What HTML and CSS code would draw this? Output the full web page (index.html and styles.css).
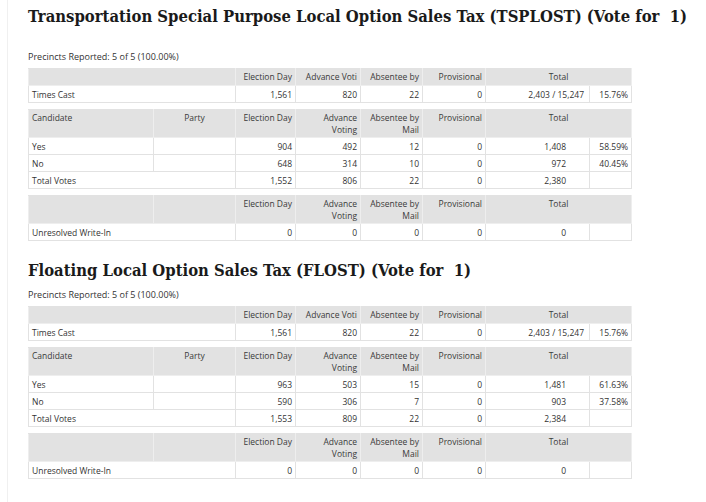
FILE: index.html
```html
<!DOCTYPE html>
<html lang="en">
<head>
<meta charset="utf-8">
<title>Election Results</title>
<link rel="stylesheet" href="styles.css">
</head>
<body>
<div class="page">
  <section class="contest contest-first">
    <h2 class="title">Transportation Special Purpose Local Option Sales Tax (TSPLOST) (Vote for &nbsp;1)</h2>
    <div class="precincts">Precincts Reported: 5 of 5 (100.00%)</div>

    <table class="grid grid-cast">
      <colgroup><col class="w1"><col class="w2"><col class="w3"><col class="w4"><col class="w5"><col class="w6"><col class="w7"><col class="w8"></colgroup>
      <tr>
        <th colspan="2"></th><th class="r">Election Day</th><th class="r">Advance Voti</th><th class="r">Absentee by</th><th class="r">Provisional</th><th colspan="2" class="c">Total</th>
      </tr>
      <tr>
        <td colspan="2">Times Cast</td><td class="r">1,561</td><td class="r">820</td><td class="r">22</td><td class="r">0</td><td class="r cast-total">2,403 / 15,247</td><td class="r">15.76%</td>
      </tr>
    </table>

    <table class="grid grid-cand">
      <colgroup><col class="w1"><col class="w2"><col class="w3"><col class="w4"><col class="w5"><col class="w6"><col class="w7"><col class="w8"></colgroup>
      <tr class="hd2">
        <th>Candidate</th><th class="c">Party</th><th class="r">Election Day</th><th class="r">Advance<br>Voting</th><th class="r">Absentee by<br>Mail</th><th class="r">Provisional</th><th colspan="2" class="c">Total</th>
      </tr>
      <tr><td>Yes</td><td></td><td class="r">904</td><td class="r">492</td><td class="r">12</td><td class="r">0</td><td class="r tot">1,408</td><td class="r">58.59%</td></tr>
      <tr><td>No</td><td></td><td class="r">648</td><td class="r">314</td><td class="r">10</td><td class="r">0</td><td class="r tot">972</td><td class="r">40.45%</td></tr>
      <tr><td colspan="2">Total Votes</td><td class="r">1,552</td><td class="r">806</td><td class="r">22</td><td class="r">0</td><td class="r tot">2,380</td><td></td></tr>
    </table>

    <table class="grid grid-write">
      <colgroup><col class="w1"><col class="w2"><col class="w3"><col class="w4"><col class="w5"><col class="w6"><col class="w7"><col class="w8"></colgroup>
      <tr class="hd2">
        <th></th><th></th><th class="r">Election Day</th><th class="r">Advance<br>Voting</th><th class="r">Absentee by<br>Mail</th><th class="r">Provisional</th><th colspan="2" class="c">Total</th>
      </tr>
      <tr><td colspan="2">Unresolved Write-In</td><td class="r">0</td><td class="r">0</td><td class="r">0</td><td class="r">0</td><td class="r tot">0</td><td></td></tr>
    </table>
  </section>

  <section class="contest">
    <h2 class="title">Floating Local Option Sales Tax (FLOST) (Vote for &nbsp;1)</h2>
    <div class="precincts">Precincts Reported: 5 of 5 (100.00%)</div>

    <table class="grid grid-cast">
      <colgroup><col class="w1"><col class="w2"><col class="w3"><col class="w4"><col class="w5"><col class="w6"><col class="w7"><col class="w8"></colgroup>
      <tr>
        <th colspan="2"></th><th class="r">Election Day</th><th class="r">Advance Voti</th><th class="r">Absentee by</th><th class="r">Provisional</th><th colspan="2" class="c">Total</th>
      </tr>
      <tr>
        <td colspan="2">Times Cast</td><td class="r">1,561</td><td class="r">820</td><td class="r">22</td><td class="r">0</td><td class="r cast-total">2,403 / 15,247</td><td class="r">15.76%</td>
      </tr>
    </table>

    <table class="grid grid-cand">
      <colgroup><col class="w1"><col class="w2"><col class="w3"><col class="w4"><col class="w5"><col class="w6"><col class="w7"><col class="w8"></colgroup>
      <tr class="hd2">
        <th>Candidate</th><th class="c">Party</th><th class="r">Election Day</th><th class="r">Advance<br>Voting</th><th class="r">Absentee by<br>Mail</th><th class="r">Provisional</th><th colspan="2" class="c">Total</th>
      </tr>
      <tr><td>Yes</td><td></td><td class="r">963</td><td class="r">503</td><td class="r">15</td><td class="r">0</td><td class="r tot">1,481</td><td class="r">61.63%</td></tr>
      <tr><td>No</td><td></td><td class="r">590</td><td class="r">306</td><td class="r">7</td><td class="r">0</td><td class="r tot">903</td><td class="r">37.58%</td></tr>
      <tr><td colspan="2">Total Votes</td><td class="r">1,553</td><td class="r">809</td><td class="r">22</td><td class="r">0</td><td class="r tot">2,384</td><td></td></tr>
    </table>

    <table class="grid grid-write">
      <colgroup><col class="w1"><col class="w2"><col class="w3"><col class="w4"><col class="w5"><col class="w6"><col class="w7"><col class="w8"></colgroup>
      <tr class="hd2">
        <th></th><th></th><th class="r">Election Day</th><th class="r">Advance<br>Voting</th><th class="r">Absentee by<br>Mail</th><th class="r">Provisional</th><th colspan="2" class="c">Total</th>
      </tr>
      <tr><td colspan="2">Unresolved Write-In</td><td class="r">0</td><td class="r">0</td><td class="r">0</td><td class="r">0</td><td class="r tot">0</td><td></td></tr>
    </table>
  </section>
</div>
</body>
</html>
```

FILE: styles.css
```css
html, body {
  margin: 0;
  padding: 0;
  background: #ffffff;
}

body {
  font-family: "Open Sans", "Noto Sans", sans-serif;
  font-size: 8.5px;
  color: #333333;
}

.page {
  margin-left: 7px;
  border-left: 1px solid #f0f0f0;
  padding-left: 20px;
  padding-top: 7px;
  min-height: 495px;
}

.contest {
  margin-top: 20px;
}

.contest-first {
  margin-top: 0;
}

.title {
  margin: 0 0 8px 0;
  font-family: "DejaVu Serif Condensed", "DejaVu Serif", serif;
  font-stretch: condensed;
  font-weight: bold;
  font-size: 16.5px;
  line-height: 20px;
  color: #1a1a1a;
  white-space: nowrap;
}

.contest-first .title {
  margin-bottom: 24px;
}

.precincts {
  font-size: 9px;
  line-height: 12px;
  margin-bottom: 5px;
}

.grid {
  border-collapse: collapse;
  table-layout: fixed;
  width: 603px;
}

.grid-cand {
  margin-top: 6px;
}

.grid-write {
  margin-top: 6px;
}

.w1 { width: 125px; }
.w2 { width: 82px; }
.w3 { width: 60px; }
.w4 { width: 65px; }
.w5 { width: 62px; }
.w6 { width: 63px; }
.w7 { width: 104px; }
.w8 { width: 42px; }

.grid tr {
  height: 17px;
}

.grid tr.hd2 {
  height: 28px;
}

.grid th,
.grid td {
  padding: 2px 3px 1px 3px;
  line-height: 12px;
  vertical-align: top;
  white-space: nowrap;
  overflow: hidden;
  text-align: left;
  font-weight: normal;
}

.grid td {
  padding-top: 3px;
  padding-bottom: 0;
  border: 1px solid #e2e2e2;
  background: #ffffff;
}

.grid th {
  background: #e2e2e2;
  border: 1px solid #eeeeee;
  border-top-color: #e2e2e2;
  color: #3a3a3a;
}

.grid .r { text-align: right; }
.grid .c { text-align: center; }

.grid .tot { padding-right: 23px; }
.grid .cast-total { padding-right: 5px; }
```
